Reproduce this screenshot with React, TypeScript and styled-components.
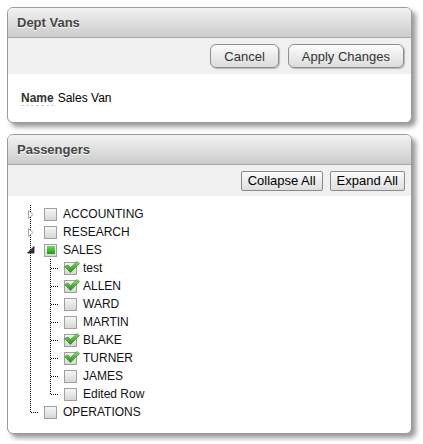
import React from 'react'
import styled, { createGlobalStyle } from 'styled-components'

const GlobalStyle = createGlobalStyle`
html, body {
  margin: 0;
  padding: 0;
  background: #fff;
}
body {
  font-family: Arial, "Liberation Sans", sans-serif;
  font-size: 12px;
  color: #000;
}
`

type Node = {
  label: string
  state: 'off' | 'on' | 'part'
  open?: boolean
  children?: Node[]
}

const tree: Node[] = [
  { label: 'ACCOUNTING', state: 'off', children: [] },
  { label: 'RESEARCH', state: 'off', children: [] },
  {
    label: 'SALES',
    state: 'part',
    open: true,
    children: [
      { label: 'test', state: 'on' },
      { label: 'ALLEN', state: 'on' },
      { label: 'WARD', state: 'off' },
      { label: 'MARTIN', state: 'off' },
      { label: 'BLAKE', state: 'on' },
      { label: 'TURNER', state: 'on' },
      { label: 'JAMES', state: 'off' },
      { label: 'Edited Row', state: 'off' },
    ],
  },
  { label: 'OPERATIONS', state: 'off' },
]

const App = () => {
  const rows: React.ReactNode[] = []
  tree.forEach((node, i) => {
    const lastTop = i === tree.length - 1
    rows.push(
      <Row key={node.label}>
        <Guide $line={lastTop ? 'end' : 'full'} $branch={!node.children || lastTop}>
          {node.children && node.children.length === 0 && <Closed />}
          {node.open && <Opened />}
        </Guide>
        <Check state={node.state} />
        <Label>{node.label}</Label>
      </Row>
    )
    if (node.open && node.children) {
      node.children.forEach((child, j) => {
        const last = j === node.children!.length - 1
        rows.push(
          <Row key={child.label}>
            <Guide $line={lastTop ? 'none' : 'full'} />
            <Guide $line={last ? 'end' : 'full'} $branch />
            <Check state={child.state} />
            <Label>{child.label}</Label>
          </Row>
        )
      })
    }
  })

  return (
    <>
      <GlobalStyle />
      <Page>
        <Region>
          <Header>Dept Vans</Header>
          <ButtonBar>
            <Button>Cancel</Button>
            <Button>Apply Changes</Button>
          </ButtonBar>
          <Body>
            <FieldLabel>Name</FieldLabel>
            <span>Sales Van</span>
          </Body>
        </Region>
        <Region>
          <Header>Passengers</Header>
          <ToolBar>
            <SmallButton>Collapse All</SmallButton>
            <SmallButton>Expand All</SmallButton>
          </ToolBar>
          <Tree>{rows}</Tree>
        </Region>
      </Page>
    </>
  )
}

export default App

const Check = ({ state }: { state: 'off' | 'on' | 'part' }) => (
  <Box>
    {state === 'part' && <Fill />}
    {state === 'on' && (
      <svg width="16" height="14" viewBox="0 0 16 14">
        <defs>
          <linearGradient id="tick" x1="0" y1="0" x2="0" y2="1">
            <stop offset="0" stopColor="#86e066" />
            <stop offset="1" stopColor="#1d9414" />
          </linearGradient>
        </defs>
        <path d="M0.5 6.5 L4 5 L6.5 7.5 L13 1.5 L15.5 3.5 L6.5 12.5 Z" fill="url(#tick)" stroke="#2a8a1c" strokeWidth="0.6" />
      </svg>
    )}
  </Box>
)

const Closed = () => (
  <svg width="6" height="9" viewBox="0 0 6 9">
    <path d="M0.5 0.5 L5 4.5 L0.5 8.5 Z" fill="#fff" stroke="#aaa" strokeWidth="1" />
  </svg>
)

const Opened = () => (
  <svg width="8" height="8" viewBox="0 0 8 8">
    <path d="M7 0.5 L7 7 L0.5 7 Z" fill="#333" stroke="#222" strokeWidth="0.8" />
  </svg>
)

const Page = styled.div`
  padding: 7px 11px 8px 7px;
  display: flex;
  flex-direction: column;
  gap: 11px;
`

const Region = styled.div`
  width: 403px;
  border: 1px solid #9a9a9a;
  border-radius: 6px;
  background: #fff;
  overflow: hidden;
  box-shadow: 4px 4px 5px rgba(0, 0, 0, 0.4);
`

const Header = styled.div`
  height: 29px;
  line-height: 29px;
  padding-left: 9px;
  font-size: 13px;
  font-weight: bold;
  color: #454545;
  text-shadow: 0 1px 0 #fff;
  background: linear-gradient(#f2f2f2, #cccccc);
  border-bottom: 1px solid #a6a6a6;
`

const ButtonBar = styled.div`
  height: 36px;
  background: #f0f0f0;
  display: flex;
  justify-content: flex-end;
  align-items: center;
  gap: 9px;
  padding-right: 7px;
`

const Button = styled.button`
  height: 24px;
  padding: 0 13px;
  font-family: Arial, "Liberation Sans", sans-serif;
  font-size: 13px;
  color: #333;
  border: 1px solid #8e8e8e;
  border-radius: 6px;
  background: linear-gradient(#fcfcfc, #dcdcdc);
  box-shadow: 1px 1px 1px rgba(0, 0, 0, 0.25);
`

const Body = styled.div`
  height: 48px;
  display: flex;
  align-items: center;
  padding-left: 13px;
  font-size: 12px;
`

const FieldLabel = styled.span`
  font-weight: bold;
  color: #333;
  margin-right: 4px;
  border-bottom: 1px dashed #ccc;
`

const ToolBar = styled.div`
  height: 31px;
  background: #f0f0f0;
  display: flex;
  justify-content: flex-end;
  align-items: center;
  gap: 7px;
  padding-right: 6px;
`

const SmallButton = styled.button`
  height: 20px;
  padding: 0 6px;
  font-family: Arial, "Liberation Sans", sans-serif;
  font-size: 13px;
  color: #000;
  border: 1px solid #8a8a8a;
  border-radius: 2px;
  background: linear-gradient(#fbfbfb, #dedede);
`

const Tree = styled.div`
  padding: 9px 0 12px 12px;
`

const Row = styled.div`
  height: 18px;
  display: flex;
  align-items: center;
`

const dots = 'repeating-linear-gradient(to bottom, #000 0 1px, transparent 1px 2px)'
const hdots = 'repeating-linear-gradient(to right, #000 0 1px, transparent 1px 2px)'

const Guide = styled.div<{ $line: 'none' | 'full' | 'end'; $branch?: boolean }>`
  width: 20px;
  height: 18px;
  flex: none;
  display: flex;
  align-items: center;
  justify-content: center;
  padding-left: 1px;
  box-sizing: border-box;
  background-repeat: no-repeat;
  background-image: ${p =>
    [p.$line !== 'none' ? dots : '', p.$branch ? hdots : ''].filter(Boolean).join(', ') || 'none'};
  background-size: ${p =>
    [p.$line !== 'none' ? `1px ${p.$line === 'end' ? 10 : 18}px` : '', p.$branch ? '7px 1px' : '']
      .filter(Boolean)
      .join(', ') || 'auto'};
  background-position: ${p =>
    [p.$line !== 'none' ? '10px 0' : '', p.$branch ? '11px 9px' : ''].filter(Boolean).join(', ') || '0 0'};
`

const Box = styled.div`
  width: 11px;
  height: 11px;
  flex: none;
  margin-left: 4px;
  border: 1px solid #a0a0a0;
  background: linear-gradient(#f6f6f6, #d6d6d6);
  display: flex;
  align-items: center;
  justify-content: center;
  overflow: visible;
  svg {
    flex: none;
    margin: -3px -3px 0 0;
  }
`

const Fill = styled.div`
  width: 8px;
  height: 8px;
  background: linear-gradient(#6ee05a, #1d9a12);
`

const Label = styled.span`
  margin-left: 6px;
  font-size: 12px;
  color: #111;
`
